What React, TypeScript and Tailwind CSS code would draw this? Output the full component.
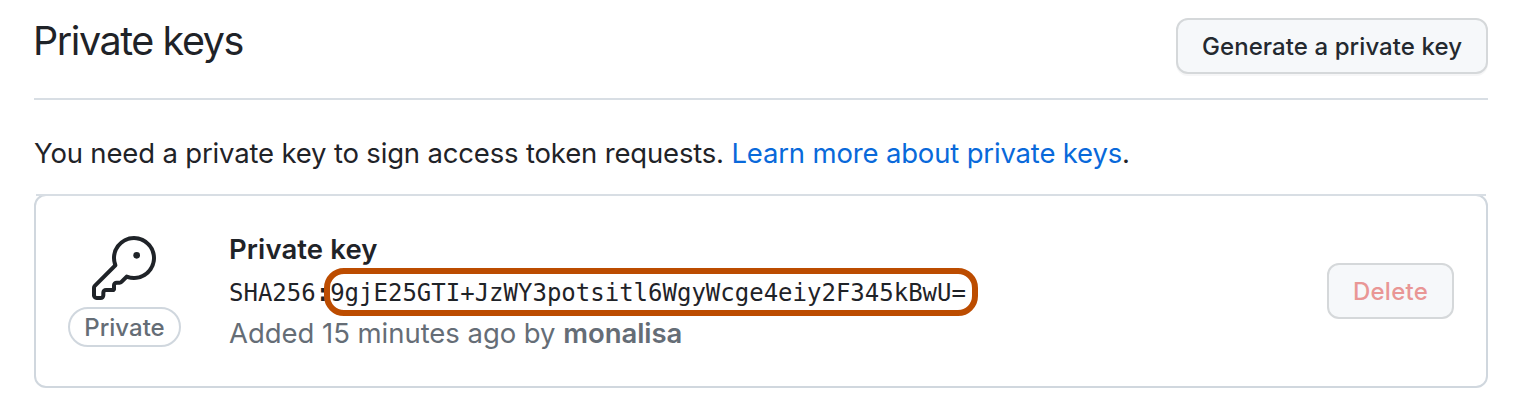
function KeyIcon() {
  return (
    <svg viewBox="0 0 24 24" className="mr-0.5 block size-16 fill-[#1f2328]" aria-hidden="true">
      <path d="M16.75 8.5a1.25 1.25 0 100-2.5 1.25 1.25 0 000 2.5z" />
      <path
        fillRule="evenodd"
        d="M15.75 0a8.25 8.25 0 00-7.851 10.79L.513 18.178A1.75 1.75 0 000 19.414v2.836C0 23.217.784 24 1.75 24h1.5A1.75 1.75 0 005 22.25v-1a.25.25 0 01.25-.25h2.735a.75.75 0 00.545-.22l.214-.213A.875.875 0 009 19.948V18.5a.25.25 0 01.25-.25h1.086c.464 0 .91-.184 1.237-.513l1.636-1.636A8.25 8.25 0 1015.75 0zM9 8.25a6.75 6.75 0 114.288 6.287.75.75 0 00-.804.168l-1.971 1.972a.25.25 0 01-.177.073H9.25A1.75 1.75 0 007.5 18.5v1H5.25a1.75 1.75 0 00-1.75 1.75v1a.25.25 0 01-.25.25h-1.5a.25.25 0 01-.25-.25v-2.836a.25.25 0 01.073-.177l7.722-7.721a.75.75 0 00.168-.804A6.73 6.73 0 019 8.25z"
      />
    </svg>
  );
}

function PrivateKeyRow() {
  return (
    <div className="-mt-0.5 flex h-[192px] items-center border-t-2 border-[#d8dee4] pr-8 pl-8">
      <div className="flex w-[113px] flex-col items-center">
        <KeyIcon />
        <span className="mt-[7px] flex h-10 w-full items-center justify-center rounded-full border-2 border-[#d0d7de] pt-0.5 text-[24px] font-medium text-[#656d76]">
          Private
        </span>
      </div>
      <div className="ml-12 flex flex-1 flex-col pt-0.5 whitespace-nowrap">
        <strong className="text-[27.5px] leading-[39px] font-semibold tracking-[0.1px]">Private key</strong>
        <code className="relative mt-[3px] w-fit font-['DejaVu_Sans_Mono',monospace] text-[24px] leading-[42px]">
          SHA256<b>:</b>9gjE25GTI+JzWY3potsitl6WgyWcge4eiy2F345kBwU=
          <span className="absolute -top-1 left-[95px] h-12 w-[654px] rounded-[20px] border-[6px] border-[#bc4c00]" />
        </code>
        <span className="mb-px text-[27.5px] leading-[39px] tracking-[-0.04px] text-[#656d76]">
          Added 15 minutes ago by <strong className="font-semibold">monalisa</strong>
        </span>
      </div>
      <button className="h-14 w-[127px] rounded-xl border-2 border-[#d5d8da] bg-[#f6f8fa] pt-0.5 text-[24px] font-medium tracking-[0.25px] text-[#e99695]">
        Delete
      </button>
    </div>
  );
}

export default function App() {
  return (
    <main className="h-[412px] overflow-hidden bg-white pt-[18px] pr-[30px] pl-[34px] font-['Inter',sans-serif] text-[#1f2328]">
      <header className="flex h-[82px] items-start justify-between border-b-2 border-[#d8dee4]">
        <h2 className="-ml-px text-[39.5px] leading-[46px] font-normal tracking-[-1.45px]">Private keys</h2>
        <button className="h-14 w-[312px] rounded-xl border-2 border-[#d5d8da] bg-[#f6f8fa] pt-0.5 text-[24px] font-medium tracking-[0.08px] text-[#24292f] shadow-[0_2px_0_rgba(31,35,40,0.04)]">
          Generate a private key
        </button>
      </header>
      <p className="mt-8 text-[27.5px] leading-[42px] tracking-[-0.17px] whitespace-nowrap">
        You need a private key to sign access token requests.{" "}
        <a className="text-[#0969da]">Learn more about private keys</a>.
      </p>
      <section className="mt-5 h-[194px] rounded-xl border-2 border-[#d0d7de]">
        <PrivateKeyRow />
      </section>
    </main>
  );
}
